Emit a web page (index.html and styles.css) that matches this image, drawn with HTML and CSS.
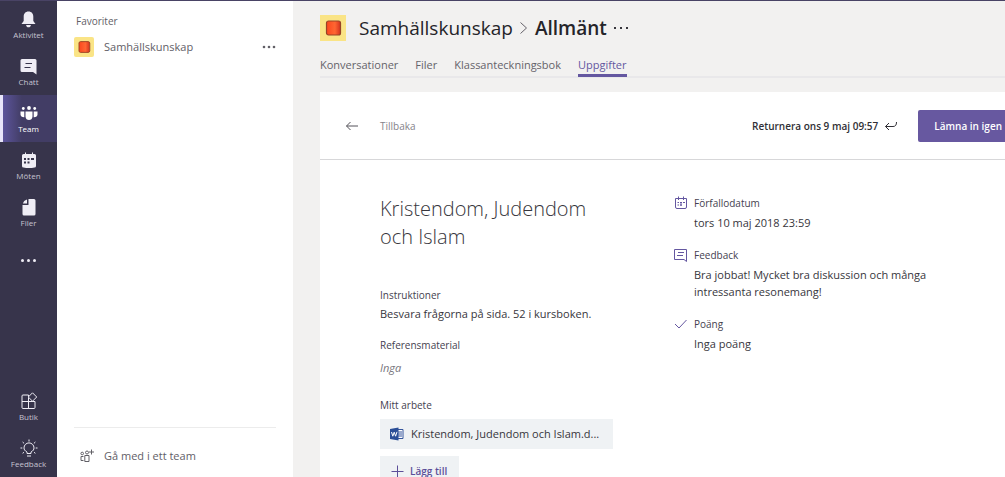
FILE: index.html
```html
<!DOCTYPE html>
<html lang="sv">
<head>
<meta charset="utf-8">
<meta name="viewport" content="width=device-width, initial-scale=1">
<title>Samhällskunskap – Uppgifter</title>
<link rel="stylesheet" href="styles.css">
</head>
<body>
<div class="app">
  <nav class="rail" aria-label="Appar">
    <button class="rail-item"><svg width="18" height="18" viewBox="0 0 18 18" fill="currentColor"><path d="M8.500 1.500C5.400 1.500 3.700 3.700 3.700 6.600V11L1.500 14H15.500L13.300 11V6.600C13.300 3.700 11.600 1.500 8.500 1.500ZM6.100 15C6.300 16.500 7.200 17.300 8.500 17.300S10.700 16.500 10.900 15Z"/></svg><span>Aktivitet</span></button>
    <button class="rail-item"><svg width="18" height="18" viewBox="0 0 18 18"><path fill="currentColor" d="M2 2H15Q16.500 2 16.500 3.500V17.500L13 15H2Q.5 15 .5 13.500V3.500Q.5 2 2 2Z"/><path stroke="#37344b" d="M5.500 6.500H12M4.500 10.500H10.500"/></svg><span>Chatt</span></button>
    <button class="rail-item active"><svg width="18" height="18" viewBox="0 0 18 18" fill="currentColor"><circle cx="9" cy="4" r="1.900"/><circle cx="3.300" cy="4.500" r="1.400"/><circle cx="14.700" cy="4.500" r="1.400"/><path d="M5.500 7.500H12.500V12.500C12.500 17.200 5.500 17.200 5.500 12.500ZM.5 7.500H4.300V13.200C2 13.300.5 12.200.5 10.500ZM17.500 7.500H13.700V13.200C16 13.300 17.500 12.200 17.500 10.500Z"/></svg><span>Team</span></button>
    <button class="rail-item"><svg width="18" height="18" viewBox="0 0 18 18"><path fill="currentColor" d="M2 4.500Q2 3 3.500 3H5V1.500H6V3H12V1.500H13V3H14.500Q16 3 16 4.500V15Q16 16.500 14.500 16.500Q9 17.500 3.500 16.500Q2 16.500 2 15Z"/><path fill="#37344b" d="M7.500 7h2v2h-2zM11 7h3v2h-3zM4 7h2v2h-2zM4 10.500h2v2h-2zM7.500 10.500h2v2h-2z"/></svg><span>Möten</span></button>
    <button class="rail-item"><svg width="18" height="18" viewBox="0 0 18 18" fill="currentColor"><path d="M8.500 1H14Q15.500 1 15.500 2.500V16Q15.500 17.500 14 17.500H4Q2.500 17.500 2.500 16V7H8.500ZM7 1.500V5.500H3Q3.500 2.500 7 1.500Z"/></svg><span>Filer</span></button>
    <button class="rail-item" aria-label="Fler appar"><svg width="18" height="18" viewBox="0 0 18 18" fill="currentColor"><circle cx="2.500" cy="8.500" r="1.500"/><circle cx="8.500" cy="8.500" r="1.500"/><circle cx="14.500" cy="8.500" r="1.500"/></svg></button>
    <button class="rail-item rail-bottom"><svg width="18" height="18" viewBox="0 0 18 18" fill="none" stroke="currentColor"><path d="M8.500 3H3Q2 3 2 4V15.500Q2 16.500 3 16.500H14Q15 16.500 15 15.500V9.500H2M8.500 3V16.500"/><path d="M12.500.800 16.700 5 12.500 9.200 8.300 5Z" fill="#37344b" stroke-linejoin="round"/></svg><span>Butik</span></button>
    <button class="rail-item"><svg width="18" height="18" viewBox="0 0 18 18" fill="none" stroke="currentColor"><path d="M7 14.500V13C4.800 11.800 4 10.500 4 8.900A5 5 0 0 1 14 8.900C14 10.500 13.200 11.800 11 13V14.500ZM7 17H11M9 .5V2.500M.5 9H2.300M15.700 9H17.500M2.600 3 4.100 4.400M15.400 3 13.900 4.400M2.600 14.300 4 13.300M15.400 14.300 14 13.300"/></svg><span>Feedback</span></button>
  </nav>

  <aside class="teams">
    <h2 class="teams-heading">Favoriter</h2>
    <div class="team">
      <svg class="team-logo" viewBox="0 0 26 26"><use href="#book"/></svg>
      <a class="team-name" href="#">Samhällskunskap</a>
      <button class="plain" aria-label="Fler alternativ"><svg width="14" height="14" viewBox="0 0 14 14" fill="currentColor"><circle cx="2" cy="7" r="1.300"/><circle cx="7" cy="7" r="1.300"/><circle cx="12" cy="7" r="1.300"/></svg></button>
    </div>
    <div class="join">
      <svg width="14" height="14" viewBox="0 0 14 14" fill="none" stroke="currentColor"><circle cx="2.200" cy="4.500" r="1.300"/><circle cx="7" cy="3.500" r="1.500"/><path d="M4.800 6.500H9V12.500H4.800ZM3.500 7.500H1V11.500H3.500M11.500.5V5.500M9 3H14"/></svg>
      <a href="#">Gå med i ett team</a>
    </div>
  </aside>

  <main class="main">
    <header class="channel">
      <svg class="channel-logo" viewBox="0 0 26 26">
        <defs><linearGradient id="red"><stop offset="0" stop-color="#fb471d"/><stop offset=".6" stop-color="#ff6632"/><stop offset="1" stop-color="#d3321e"/></linearGradient></defs>
        <g id="book"><path fill="#fae486" d="M0 0H26V26H0Z"/><rect x="6.500" y="6" width="14" height="14" rx="2" fill="url(#red)" stroke="#984426" stroke-width="1.200"/></g>
      </svg>
      <h1 class="crumbs"><span>Samhällskunskap</span><svg width="10" height="14" viewBox="0 0 10 14" fill="none" stroke="#65626a"><path d="M1.500 1.500 7.500 7 1.500 12.500"/></svg><strong>Allmänt</strong></h1>
      <button class="plain" aria-label="Fler alternativ"><svg width="14" height="14" viewBox="0 0 14 14" fill="currentColor"><path d="M0 6h2v2H0zM6 6h2v2H6zM12 6h2v2h-2z"/></svg></button>
    </header>
    <nav class="tabs">
      <a href="#">Konversationer</a><a href="#">Filer</a><a href="#">Klassanteckningsbok</a><a class="current" href="#">Uppgifter</a>
    </nav>

    <section class="card">
      <div class="toolbar">
        <a class="back" href="#"><svg width="14" height="12" viewBox="0 0 14 12" fill="none" stroke="#55535a"><path d="M13 6H1.500M5.500 2 1.500 6 5.500 10"/></svg><span>Tillbaka</span></a>
        <p class="returned">Returnera ons 9 maj 09:57 <svg width="14" height="12" viewBox="0 0 14 12" fill="none" stroke="currentColor"><path d="M12.500 2C12.500 5 11.500 6.500 9 6.500H1.500M5 3 1.500 6.500 5 10"/></svg></p>
        <button class="submit">Lämna in igen</button>
      </div>
      <div class="details">
        <div class="work">
          <h2 class="title">Kristendom, Judendom och Islam</h2>
          <h3 class="label">Instruktioner</h3>
          <p class="text instructions">Besvara frågorna på sida. 52 i kursboken.</p>
          <h3 class="label">Referensmaterial</h3>
          <p class="text none">Inga</p>
          <h3 class="label">Mitt arbete</h3>
          <a class="file" href="#"><svg width="14" height="14" viewBox="0 0 14 14"><path fill="#fff" stroke="#34559b" d="M7.500 2.500H13V11.500H7.500Z"/><path stroke="#34559b" d="M8 5H12M8 7H12M8 9H12"/><path fill="#2b4f97" d="M0 2 8.500 .5V13.500L0 12Z"/><path fill="none" stroke="#fff" d="M1.500 5 2.800 9.200 4.200 5.200 5.600 9.200 7 4.800"/></svg><span>Kristendom, Judendom och Islam.d...</span></a>
          <button class="add"><svg width="14" height="14" viewBox="0 0 14 14" fill="none" stroke="currentColor"><path d="M7.500 1.500V13.500M1.500 7.500H13.500"/></svg>Lägg till</button>
        </div>
        <div class="facts">
          <svg width="14" height="14" viewBox="0 0 14 14" fill="none" stroke="currentColor"><path d="M1.500 2.500H12.500V11Q12.500 12.500 11 12.500H3Q1.500 12.500 1.500 11ZM4.500 .5V4M9.500 .5V4M3.500 6.500H5M6 6.500H8M9 6.500H11M3.500 9H5M6 9H8M7 6V10"/></svg>
          <div class="fact"><h3 class="label">Förfallodatum</h3><p class="text">tors 10 maj 2018 23:59</p></div>
          <svg width="14" height="14" viewBox="0 0 14 14" fill="none" stroke="currentColor"><path d="M.5 1.500H12.500V13.500L10 11.500H.5ZM4 4.500H10M3 7.500H9"/></svg>
          <div class="fact"><h3 class="label">Feedback</h3><p class="text">Bra jobbat! Mycket bra diskussion och många intressanta resonemang!</p></div>
          <svg width="14" height="14" viewBox="0 0 14 14" fill="none" stroke="currentColor"><path d="M1 7 5 11 12.500 3"/></svg>
          <div class="fact"><h3 class="label">Poäng</h3><p class="text">Inga poäng</p></div>
        </div>
      </div>
    </section>
  </main>
</div>
</body>
</html>
```
FILE: styles.css
```css
* { box-sizing: border-box; }
body, h1, h2, h3, p { margin: 0; font-weight: 400; }
body { font-family: "Open Sans", "Noto Sans", sans-serif; font-size: 11px; line-height: 16px; color: #37363c; background: #f2f1f0; }
a { color: inherit; text-decoration: none; }
button { font: inherit; color: inherit; border: 0; background: none; padding: 0; cursor: pointer; }
svg { display: block; flex: none; }

.app { display: flex; height: 100vh; overflow: hidden; border-top: 1px solid #494365; }

.rail { display: flex; flex-direction: column; width: 57px; flex: none; background: #37344b; color: #efedf5; }
.rail-item { display: flex; flex-direction: column; align-items: center; justify-content: center; gap: 1px; height: 47px; flex: none; padding-top: 2px; font-size: 8px; line-height: 12px; }
.rail-item span { color: #c6c3d1; }
.rail-item.active { background: linear-gradient(90deg, #5c549b, #423d65 35%); border-left: 3px solid #e8e5fa; padding-right: 3px; color: #fff; }
.rail-item.active span { color: #fff; }
.rail-bottom { margin-top: auto; }

.teams { display: flex; flex-direction: column; width: 236px; flex: none; padding: 12px 17px 0; background: #fff; color: #626067; }
.teams-heading { padding-left: 2px; font-size: 10px; line-height: 16px; }
.team { display: flex; align-items: center; gap: 10px; margin-top: 8px; }
.team-logo { width: 20px; height: 20px; border-radius: 2px; }
.team-name { flex: 1; }
.join { display: flex; align-items: center; gap: 10px; height: 50px; margin-top: auto; padding: 6px 0 0 6px; border-top: 1px solid #ececec; }

.main { flex: 1; min-width: 0; padding-left: 27px; overflow: hidden; }
.channel { display: flex; align-items: center; gap: 13px; padding-top: 12px; height: 41px; }
.channel-logo { width: 26px; height: 26px; }
.crumbs { display: flex; align-items: center; gap: 6px; font-size: 19px; line-height: 28px; color: #252429; }
.crumbs strong { font-weight: 600; }
.channel .plain { margin-left: -6px; }
.tabs { display: flex; gap: 17px; padding-top: 14px; border-bottom: 2px solid #e9e8ea; color: #65636a; }
.tabs a { line-height: 18px; }
.tabs .current { color: #6457a0; border-bottom: 3px solid #6457a0; margin-bottom: -1px; }

.card { margin-top: 14px; background: #fff; min-height: 100%; }
.toolbar { display: flex; align-items: center; height: 68px; margin-right: -13px; padding-left: 25px; border-bottom: 1px solid #d7d7d9; }
.back { display: flex; align-items: center; gap: 21px; font-size: 10px; color: #85838a; }
.returned { display: flex; align-items: center; gap: 6px; margin-left: auto; font-size: 10px; font-weight: 600; color: #302f35; }
.submit { height: 32px; margin-left: 20px; padding: 0 16px; border-radius: 2px; background: #6758a0; color: #fff; font-size: 10px; font-weight: 600; }

.details { display: grid; grid-template-columns: 233px minmax(0, 270px); gap: 61px; padding: 35px 0 0 60px; }
.title { font-size: 20px; line-height: 28px; font-weight: 300; margin-bottom: 36px; }
.label { font-size: 10px; line-height: 16px; color: #45414f; }
.text { line-height: 17px; }
.instructions { padding: 2px 0 15px; }
.none { padding: 6px 0 21px; font-style: italic; color: #77757c; }
.file { display: flex; align-items: center; gap: 7px; height: 30px; margin-top: 6px; padding: 0 10px; background: #eff2f4; }
.file span { white-space: nowrap; }
.add { display: flex; align-items: center; gap: 6px; height: 30px; margin-top: 7px; padding: 0 12px 0 10px; background: #eff2f4; color: #5c4f99; font-size: 10px; font-weight: 600; }
.facts { display: grid; grid-template-columns: 14px minmax(0, 1fr); column-gap: 6px; row-gap: 16px; align-content: start; color: #6457a0; }
.facts svg { margin-top: 1px; }
.fact { display: grid; gap: 3px; color: #37363c; }
```
